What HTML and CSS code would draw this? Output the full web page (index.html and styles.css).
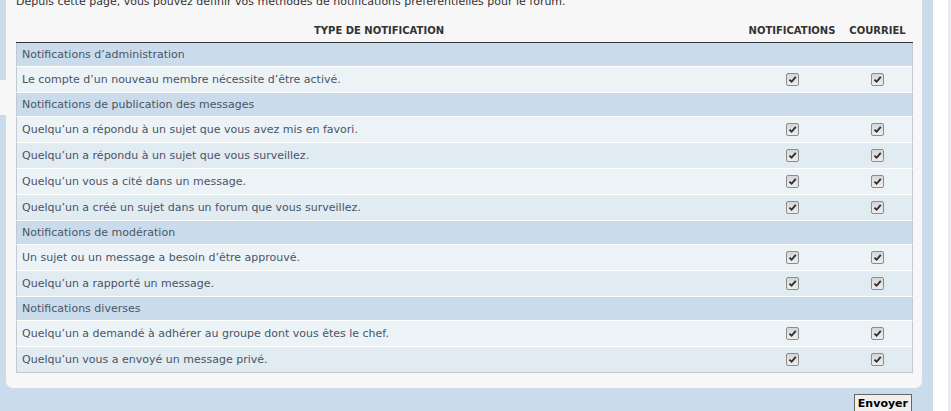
FILE: index.html
```html
<!DOCTYPE html>
<html lang="fr">
<head>
    <meta charset="UTF-8">
    <meta name="viewport" content="width=device-width, initial-scale=1.0">
    <title>Préférences de notification</title>
    <link rel="stylesheet" href="styles.css">
</head>
<body>
<div class="page">
    <div class="nav-edge"><div class="nav-tab"></div></div>

    <form class="main" id="ucp">
        <div class="panel">
            <p class="intro">Depuis cette page, vous pouvez définir vos méthodes de notifications préférentielles pour le forum.</p>

            <table class="table1">
                <colgroup>
                    <col>
                    <col class="col-notif">
                    <col class="col-mail">
                </colgroup>
                <thead>
                    <tr>
                        <th>Type de notification</th>
                        <th class="mark">Notifications</th>
                        <th class="mark">Courriel</th>
                    </tr>
                </thead>
                <tbody>
                    <tr class="section first"><td colspan="3">Notifications d’administration</td></tr>
                    <tr class="bg1">
                        <td>Le compte d’un nouveau membre nécessite d’être activé.</td>
                        <td class="mark"><span class="tick"><svg viewBox="0 0 10 10" width="9" height="9"><path d="M1.6 5.2 L4 7.5 L8.6 2.2" fill="none" stroke="#2e2e2e" stroke-width="2.1"/></svg></span></td>
                        <td class="mark"><span class="tick"><svg viewBox="0 0 10 10" width="9" height="9"><path d="M1.6 5.2 L4 7.5 L8.6 2.2" fill="none" stroke="#2e2e2e" stroke-width="2.1"/></svg></span></td>
                    </tr>

                    <tr class="section"><td colspan="3">Notifications de publication des messages</td></tr>
                    <tr class="bg1">
                        <td>Quelqu’un a répondu à un sujet que vous avez mis en favori.</td>
                        <td class="mark"><span class="tick"><svg viewBox="0 0 10 10" width="9" height="9"><path d="M1.6 5.2 L4 7.5 L8.6 2.2" fill="none" stroke="#2e2e2e" stroke-width="2.1"/></svg></span></td>
                        <td class="mark"><span class="tick"><svg viewBox="0 0 10 10" width="9" height="9"><path d="M1.6 5.2 L4 7.5 L8.6 2.2" fill="none" stroke="#2e2e2e" stroke-width="2.1"/></svg></span></td>
                    </tr>
                    <tr class="bg2">
                        <td>Quelqu’un a répondu à un sujet que vous surveillez.</td>
                        <td class="mark"><span class="tick"><svg viewBox="0 0 10 10" width="9" height="9"><path d="M1.6 5.2 L4 7.5 L8.6 2.2" fill="none" stroke="#2e2e2e" stroke-width="2.1"/></svg></span></td>
                        <td class="mark"><span class="tick"><svg viewBox="0 0 10 10" width="9" height="9"><path d="M1.6 5.2 L4 7.5 L8.6 2.2" fill="none" stroke="#2e2e2e" stroke-width="2.1"/></svg></span></td>
                    </tr>
                    <tr class="bg1">
                        <td>Quelqu’un vous a cité dans un message.</td>
                        <td class="mark"><span class="tick"><svg viewBox="0 0 10 10" width="9" height="9"><path d="M1.6 5.2 L4 7.5 L8.6 2.2" fill="none" stroke="#2e2e2e" stroke-width="2.1"/></svg></span></td>
                        <td class="mark"><span class="tick"><svg viewBox="0 0 10 10" width="9" height="9"><path d="M1.6 5.2 L4 7.5 L8.6 2.2" fill="none" stroke="#2e2e2e" stroke-width="2.1"/></svg></span></td>
                    </tr>
                    <tr class="bg2">
                        <td>Quelqu’un a créé un sujet dans un forum que vous surveillez.</td>
                        <td class="mark"><span class="tick"><svg viewBox="0 0 10 10" width="9" height="9"><path d="M1.6 5.2 L4 7.5 L8.6 2.2" fill="none" stroke="#2e2e2e" stroke-width="2.1"/></svg></span></td>
                        <td class="mark"><span class="tick"><svg viewBox="0 0 10 10" width="9" height="9"><path d="M1.6 5.2 L4 7.5 L8.6 2.2" fill="none" stroke="#2e2e2e" stroke-width="2.1"/></svg></span></td>
                    </tr>

                    <tr class="section"><td colspan="3">Notifications de modération</td></tr>
                    <tr class="bg1">
                        <td>Un sujet ou un message a besoin d’être approuvé.</td>
                        <td class="mark"><span class="tick"><svg viewBox="0 0 10 10" width="9" height="9"><path d="M1.6 5.2 L4 7.5 L8.6 2.2" fill="none" stroke="#2e2e2e" stroke-width="2.1"/></svg></span></td>
                        <td class="mark"><span class="tick"><svg viewBox="0 0 10 10" width="9" height="9"><path d="M1.6 5.2 L4 7.5 L8.6 2.2" fill="none" stroke="#2e2e2e" stroke-width="2.1"/></svg></span></td>
                    </tr>
                    <tr class="bg2">
                        <td>Quelqu’un a rapporté un message.</td>
                        <td class="mark"><span class="tick"><svg viewBox="0 0 10 10" width="9" height="9"><path d="M1.6 5.2 L4 7.5 L8.6 2.2" fill="none" stroke="#2e2e2e" stroke-width="2.1"/></svg></span></td>
                        <td class="mark"><span class="tick"><svg viewBox="0 0 10 10" width="9" height="9"><path d="M1.6 5.2 L4 7.5 L8.6 2.2" fill="none" stroke="#2e2e2e" stroke-width="2.1"/></svg></span></td>
                    </tr>

                    <tr class="section"><td colspan="3">Notifications diverses</td></tr>
                    <tr class="bg1">
                        <td>Quelqu’un a demandé à adhérer au groupe dont vous êtes le chef.</td>
                        <td class="mark"><span class="tick"><svg viewBox="0 0 10 10" width="9" height="9"><path d="M1.6 5.2 L4 7.5 L8.6 2.2" fill="none" stroke="#2e2e2e" stroke-width="2.1"/></svg></span></td>
                        <td class="mark"><span class="tick"><svg viewBox="0 0 10 10" width="9" height="9"><path d="M1.6 5.2 L4 7.5 L8.6 2.2" fill="none" stroke="#2e2e2e" stroke-width="2.1"/></svg></span></td>
                    </tr>
                    <tr class="bg2 last">
                        <td>Quelqu’un vous a envoyé un message privé.</td>
                        <td class="mark"><span class="tick"><svg viewBox="0 0 10 10" width="9" height="9"><path d="M1.6 5.2 L4 7.5 L8.6 2.2" fill="none" stroke="#2e2e2e" stroke-width="2.1"/></svg></span></td>
                        <td class="mark"><span class="tick"><svg viewBox="0 0 10 10" width="9" height="9"><path d="M1.6 5.2 L4 7.5 L8.6 2.2" fill="none" stroke="#2e2e2e" stroke-width="2.1"/></svg></span></td>
                    </tr>
                </tbody>
            </table>
        </div>

        <div class="submit-row">
            <button type="submit" class="button1">Envoyer</button>
        </div>
    </form>

    <div class="side-white"></div>
</div>
</body>
</html>
```

FILE: styles.css
```css
html, body { margin: 0; padding: 0; }
body {
    background-color: #cadceb;
    font-family: "DejaVu Sans", Verdana, sans-serif;
    font-size: 11px;
    color: #4a5466;
    height: 411px;
    overflow: hidden;
}

.page { display: flex; height: 411px; }

/* bout du menu de gauche */
.nav-edge { flex: 0 0 6px; }
.nav-tab { margin-top: 80px; height: 35px; background-color: #f7f7f7; }

.main { flex: 0 0 927px; }

.panel {
    margin-top: -6px;
    margin-right: 11px;
    padding: 0 9px 15px 10px;
    background-color: #f7f7f7;
    border-radius: 0 0 7px 7px;
}

.intro {
    margin: 0 0 10px;
    line-height: 16px;
    color: #333;
}

/* Tableau des notifications */
.table1 {
    width: 100%;
    border-collapse: separate;
    border-spacing: 0;
}
.col-notif { width: 100px; }
.col-mail { width: 71px; }

.table1 th {
    padding: 4px 4px;
    line-height: 14px;
    font-size: 10px;
    font-weight: bold;
    text-transform: uppercase;
    color: #333;
    text-align: center;
    border-bottom: 1px solid #333;
}

.table1 td {
    padding: 5px 5px;
    line-height: 15px;
    border-top: 1px solid #fff;
}
.table1 td:first-child { border-left: 1px solid #c3c9d4; }
.table1 td:last-child { border-right: 1px solid #c3c9d4; }
.table1 tr.last td { border-bottom: 1px solid #c3c9d4; }

.table1 tr.section td { padding: 4px 5px; background-color: #cadceb; }
.table1 tr.first td { border-top: none; }

.bg1 td { background-color: #ecf3f7; }
.bg2 td { background-color: #e1ebf2; }

.table1 td.mark { text-align: center; padding: 0; }

.tick {
    display: inline-block;
    width: 11px;
    height: 11px;
    border: 1px solid #8c8c8c;
    border-radius: 2px;
    background: linear-gradient(#d6d6d6, #eeeeee);
    vertical-align: middle;
    position: relative;
    top: -1px;
}
.tick svg { display: block; margin: 1px 0 0 1px; }

/* Bouton */
.submit-row {
    margin-right: 11px;
    padding: 6px 10px 0 0;
    text-align: right;
}
.button1 {
    font-family: "DejaVu Sans", Verdana, sans-serif;
    font-size: 11px;
    font-weight: bold;
    line-height: 16px;
    color: #000;
    background-color: #efefef;
    border: 1px solid #666;
    padding: 1px 3px;
    margin: 0;
}

.side-white {
    flex: 0 0 15px;
    background-color: #fff;
    border-right: 3px solid #e6ecf1;
}
```
